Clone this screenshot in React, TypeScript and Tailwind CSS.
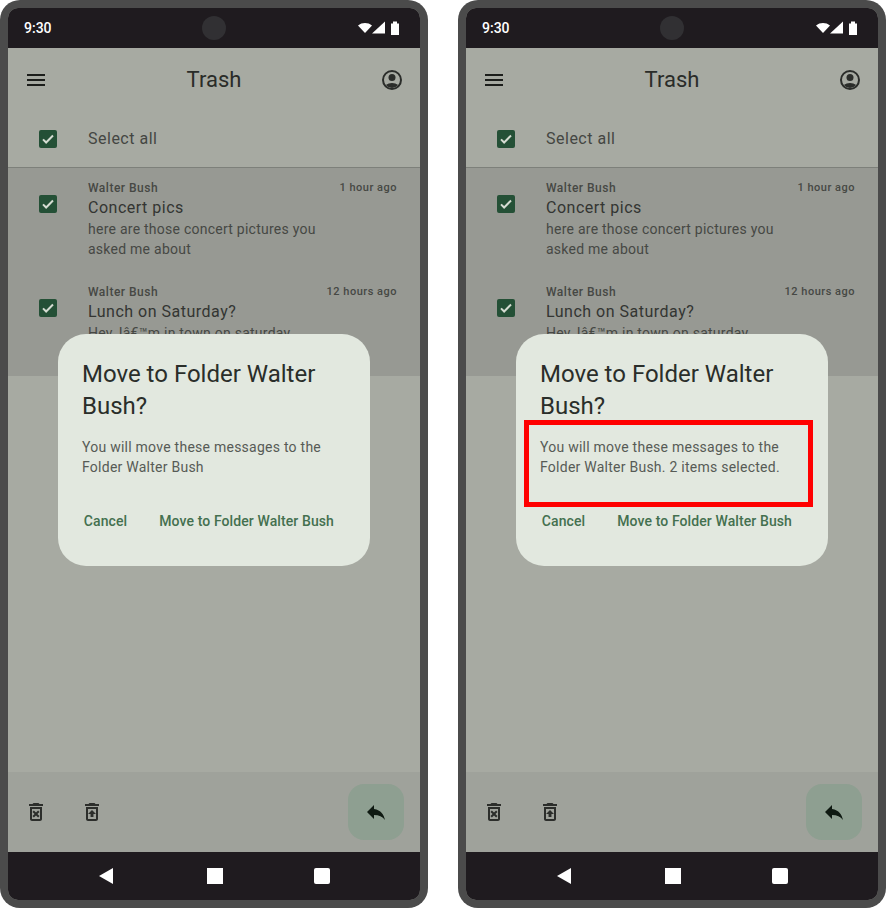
const checkPath = "M4.5 12.5l4.7 4.7L19.5 6.8";

function CheckBox() {
  return (
    <span className="flex h-[18px] w-[18px] shrink-0 items-center justify-center rounded-[2px] bg-[#245036]">
      <svg viewBox="0 0 24 24" className="h-4 w-4" fill="none" stroke="#d5dcd2" strokeWidth="3">
        <path d={checkPath} />
      </svg>
    </span>
  );
}

function Message({ title, time, body }: { title: string; time: string; body: string }) {
  return (
    <div className="flex h-[104px] shrink-0 pl-[31px] pr-[23px]">
      <div className="mt-4">
        <CheckBox />
      </div>
      <div className="ml-[31px] min-w-0 flex-1 pt-px">
        <div className="flex items-center justify-between text-[12px] leading-4 font-medium tracking-[0.5px] text-[#464844]">
          <span>Walter Bush</span>
          <span className="text-[11px]">{time}</span>
        </div>
        <div className="text-[16px] leading-6 tracking-[0.5px] text-[#333532]">{title}</div>
        <div className="-mt-px w-[244px] text-[14px] leading-5 tracking-[0.25px] text-[#464844]">{body}</div>
      </div>
    </div>
  );
}

function Phone({ text, marked }: { text: string; marked?: boolean }) {
  return (
    <div className="h-[908px] w-[428px] shrink-0 rounded-[20px] bg-[#4b4b4b] p-2">
      <div className="relative flex h-full flex-col overflow-hidden rounded-[10px] bg-[#a7aaa2]">
        {/* status bar */}
        <div className="relative flex h-10 shrink-0 items-center justify-between bg-[#1f1b1f] pl-4 pr-5 text-white">
          <span className="text-[14px] font-medium">9:30</span>
          <span className="absolute left-[194px] top-2 h-6 w-6 rounded-full bg-[#313033]" />
          <svg viewBox="0 0 42 14" className="h-[14px] w-[42px]" fill="white">
            <path d="M0 4.5C2 2.8 4.5 2 7 2s5 .8 7 2.5L7 12z" />
            <path d="M14 12.5L27 .5v12z" />
            <path d="M33 2.5h2V.5h4v2h2V14h-8z" />
          </svg>
        </div>

        {/* app bar */}
        <div className="flex h-16 shrink-0 items-center justify-between px-4">
          <svg viewBox="0 0 24 24" className="h-6 w-6" fill="#1c1e1b">
            <path d="M3 18h18v-2H3v2zm0-5h18v-2H3v2zm0-7v2h18V6H3z" />
          </svg>
          <span className="text-[22px] leading-7 text-[#2a2c29]">Trash</span>
          <svg viewBox="0 0 24 24" className="h-6 w-6" fill="#2b2d2a">
            <path fillRule="evenodd" d="M12 2a10 10 0 100 20 10 10 0 000-20zm0 2a8 8 0 110 16 8 8 0 010-16z" />
            <circle cx="12" cy="9.5" r="3.5" />
            <path d="M5.86 17.12C7.55 15.8 9.68 15 12 15s4.45.8 6.14 2.12A8 8 0 0 1 5.86 17.12z" />
          </svg>
        </div>

        {/* select all */}
        <div className="flex h-14 shrink-0 items-center border-b border-[#7d807a] pb-px pl-[31px]">
          <CheckBox />
          <span className="ml-[31px] text-[16px] tracking-[0.5px] text-[#444642]">Select all</span>
        </div>

        {/* messages */}
        <div className="flex h-[208px] shrink-0 flex-col overflow-hidden bg-[#979993] pt-[11px]">
          <Message
            title="Concert pics"
            time="1 hour ago"
            body="here are those concert pictures you asked me about"
          />
          <Message
            title="Lunch on Saturday?"
            time="12 hours ago"
            body="Hey, Iâ€™m in town on saturday"
          />
        </div>

        <div className="flex-1" />

        {/* bottom bar */}
        <div className="flex h-20 shrink-0 items-start justify-between bg-[#9fa29b] pl-4 pr-4 pt-3">
          <div className="flex h-14 items-center gap-8">
            <svg viewBox="0 0 24 24" className="h-6 w-6" fill="#2c2e2b">
              <path d="M14.12 10.47L12 12.59l-2.13-2.12-1.41 1.41L10.59 14l-2.12 2.12 1.41 1.41L12 15.41l2.12 2.12 1.41-1.41L13.41 14l2.12-2.12zM15.5 4l-1-1h-5l-1 1H5v2h14V4zM6 19c0 1.1.9 2 2 2h8c1.1 0 2-.9 2-2V7H6v12zM8 9h8v10H8V9z" />
            </svg>
            <svg viewBox="0 0 24 24" className="h-6 w-6" fill="#2c2e2b">
              <path d="M15.5 4l-1-1h-5l-1 1H5v2h14V4zM6 19c0 1.1.9 2 2 2h8c1.1 0 2-.9 2-2V7H6v12zm2-10h8v10H8V9zm0 5h2.55v3h2.9v-3H16l-4-4z" />
            </svg>
          </div>
          <div className="flex h-14 w-14 items-center justify-center rounded-2xl bg-[#8e9f91]">
            <svg viewBox="0 0 24 24" className="h-6 w-6" fill="#0f1a12">
              <path d="M10 9V5l-7 7 7 7v-4.1c5 0 8.5 1.6 11 5.1-1-5-4-10-11-11z" />
            </svg>
          </div>
        </div>

        {/* nav bar */}
        <div className="flex h-12 shrink-0 items-center bg-[#1f1b1f] pl-[91px]">
          <svg viewBox="0 0 14 16" className="h-4 w-[14px]" fill="white">
            <path d="M14 0v16L0 8z" />
          </svg>
          <span className="ml-[94px] h-4 w-4 bg-white" />
          <span className="ml-[91px] h-4 w-4 rounded-[2px] bg-white" />
        </div>

        {/* dialog */}
        <div className="absolute left-[50px] top-[326px] h-[232px] w-[312px] rounded-[28px] bg-[#e2e8df] p-6">
          <div className="text-[24px] leading-8 text-[#2a2e2a]">Move to Folder Walter Bush?</div>
          <div className="mt-[15px] h-10 text-[14px] leading-5 tracking-[0.25px] text-[#575b56]">{text}</div>
          <div className="mt-6 flex h-10 items-center justify-end gap-2 whitespace-nowrap text-[14px] font-medium tracking-[0.1px] text-[#44704f]">
            <span className="px-3">Cancel</span>
            <span className="px-3">Move to Folder Walter Bush</span>
          </div>
          {marked && (
            <div className="absolute left-[8px] top-[86px] h-[87px] w-[289px] border-[5px] border-[#ff0000]" />
          )}
        </div>
      </div>
    </div>
  );
}

export default function App() {
  return (
    <div className="flex h-[908px] w-[886px] justify-between overflow-hidden bg-white font-['Roboto',sans-serif]">
      <Phone text="You will move these messages to the Folder Walter Bush" />
      <Phone text="You will move these messages to the Folder Walter Bush. 2 items selected." marked />
    </div>
  );
}
